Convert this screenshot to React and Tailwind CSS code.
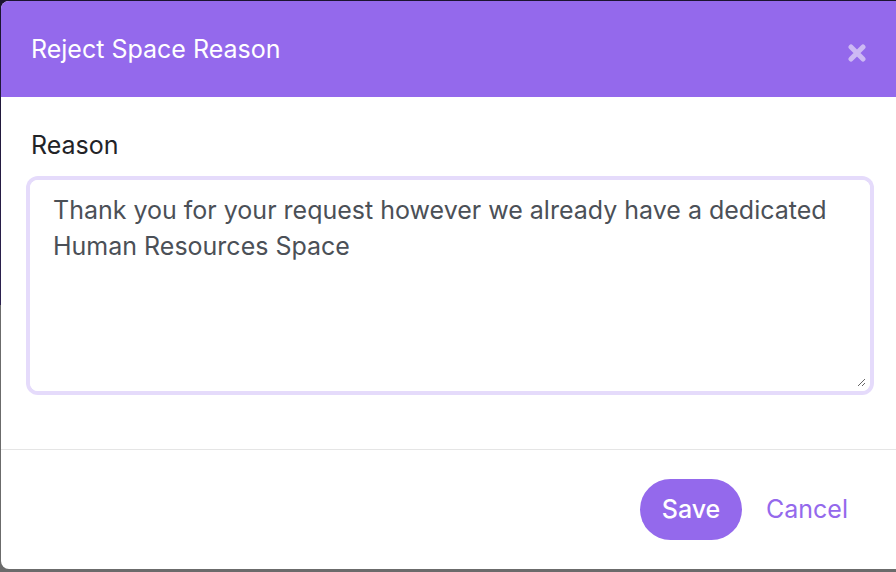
export default function App() {
  return (
    <div
      className="w-[896px] h-[572px] overflow-hidden pl-px pt-px bg-[linear-gradient(to_bottom,#1b1430_0px,#2c2150_305px,#6b6b6b_305px,#6b6b6b_100%)]"
      style={{ fontFamily: 'Inter, "Noto Sans", sans-serif' }}
    >
      <div className="w-[898px] h-[568px] bg-white rounded-tl-lg rounded-bl-lg overflow-hidden flex flex-col">
        <div className="h-[96px] shrink-0 bg-[#9469ec] flex items-center justify-between pl-[30px] pr-[33px]">
          <h2 className="text-[25px] leading-9 text-white font-normal">Reject Space Reason</h2>
          <button className="w-[18px] h-[20px] mt-[8px] flex items-center justify-center">
            <svg width="18" height="18" viewBox="0 0 18 18">
              <path d="M3 3 L15 15 M15 3 L3 15" stroke="#cdb9f4" strokeWidth="5" strokeLinecap="round" />
            </svg>
          </button>
        </div>
        <div className="px-[29px] pt-[30px] pb-[58px] flex flex-col">
          <label className="pl-px text-[25px] leading-9 text-[#222327] mb-[17px]">Reason</label>
          <textarea
            className="h-[211px] border-4 border-white rounded-[8px] shadow-[0_0_0_4px_#e5dbfb] px-[19px] pt-[8px] text-[25px] leading-9 text-[#4b5057] outline-none resize-y"
            defaultValue="Thank you for your request however we already have a dedicated Human Resources Space"
          />
        </div>
        <div className="h-px bg-[#e5e5e5] shrink-0" />
        <div className="flex-1 flex items-center justify-end pr-[33px] gap-[6px]">
          <button className="h-[61px] w-[102px] rounded-full bg-[#9469ec] text-white text-[25px] font-medium">Save</button>
          <button className="h-[61px] px-[18px] text-[#9469ec] text-[25px]">Cancel</button>
        </div>
      </div>
    </div>
  );
}
